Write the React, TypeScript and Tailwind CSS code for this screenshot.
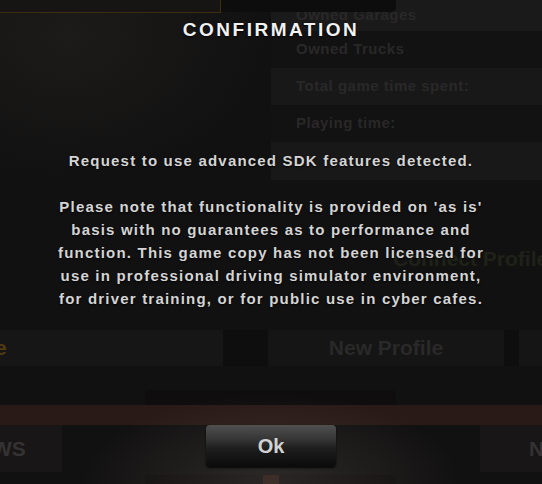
import React from 'react';

const ghostRows = [
  { label: 'Owned Garages', h: 'h-[31px]', tone: 'bg-[#1b1a1a]' },
  { label: 'Owned Trucks', h: 'h-[37px]', tone: 'bg-[#131212]' },
  { label: 'Total game time spent:', h: 'h-[37px]', tone: 'bg-[#191818]' },
  { label: 'Playing time:', h: 'h-[37px]', tone: 'bg-[#131212]' },
  { label: '', h: 'h-[38px]', tone: 'bg-[#191818]' },
];

const notice = [
  "Please note that functionality is provided on 'as is'",
  'basis with no guarantees as to performance and',
  'function. This game copy has not been licensed for',
  'use in professional driving simulator environment,',
  'for driver training, or for public use in cyber cafes.',
];

export default function App() {
  return (
    <div className="relative h-[484px] w-[542px] overflow-hidden bg-[#121111] font-['Liberation_Sans',Arial,sans-serif] font-bold">
      {/* dimmed screen behind the dialog */}
      <div className="flex h-full flex-col">
        <div className="flex h-[180px]">
          <div className="flex w-[271px] flex-col bg-[radial-gradient(ellipse_at_25%_20%,#1c1b1a,#121111_70%)]">
            <div className="h-[13px] w-[221px] border-b border-r border-[#3f2d12] bg-[#171513]" />
          </div>
          <div className="flex flex-1 flex-col">
            {ghostRows.map((r) => (
              <div key={r.h + r.label} className={`flex items-center pl-[25px] ${r.h} ${r.tone}`}>
                <span className="text-[15px] tracking-[0.5px] text-[#292828]">{r.label}</span>
              </div>
            ))}
          </div>
        </div>
        <div className="flex h-[150px] items-center pl-[393px] pt-[8px]">
          <span className="whitespace-nowrap text-[21px] text-[#1f2218]">Connect Profile</span>
        </div>
        <div className="flex h-[36px]">
          <div className="flex w-[223px] items-center bg-[#171616]">
            <span className="-ml-[5px] text-[21px] text-[#523a12]">e</span>
          </div>
          <div className="w-[45px] bg-[#0f0e0e]" />
          <div className="flex w-[236px] items-center justify-center bg-[#161515]">
            <span className="text-[21px] text-[#2a2929]">New Profile</span>
          </div>
          <div className="w-[15px] bg-[#0f0e0e]" />
          <div className="flex-1 bg-[#161515]" />
        </div>
        <div className="flex h-[39px] items-end">
          <div className="ml-[145px] h-[15px] w-[251px] rounded-t-[4px] bg-[#0f0d0d]" />
        </div>
        <div className="h-[20px] bg-[#291a17]" />
        <div className="flex h-[47px] items-center justify-between">
          <div className="flex h-full w-[62px] items-center bg-[#181616]">
            <span className="-ml-[8px] text-[21px] text-[#343232]">WS</span>
          </div>
          <div className="flex h-full w-[62px] items-center bg-[#181616] pl-[49px]">
            <span className="text-[21px] text-[#343232]">N</span>
          </div>
        </div>
        <div className="flex flex-1 items-end">
          <div className="ml-[145px] flex h-[9px] w-[251px] justify-center rounded-t-[4px] bg-[#0f0d0d]">
            <div className="w-[16px] bg-[#2c1915]" />
          </div>
        </div>
      </div>

      {/* tab at the top edge overlapping the stats rows */}
      <div className="absolute left-[221px] top-0 h-[12px] w-[175px] rounded-br-[5px] bg-[#0e0d0d]" />

      {/* confirmation dialog */}
      <div className="absolute inset-0 flex flex-col items-center bg-[radial-gradient(ellipse_190px_90px_at_50%_100%,rgba(95,88,84,0.35),transparent)]">
        <h1 className="mt-[19px] text-[19px] leading-[22px] tracking-[2.5px] text-[#f2f2f2] [text-shadow:0_1px_2px_rgba(0,0,0,0.9)]">
          CONFIRMATION
        </h1>
        <div className="mt-[108px] flex flex-col items-center text-[15px] leading-[23px] tracking-[1.2px] text-[#d4d4d4] [text-shadow:0_1px_2px_rgba(0,0,0,0.9)]">
          <p>Request to use advanced SDK features detected.</p>
          <div className="h-[23px]" />
          {notice.map((line) => (
            <p key={line} className="whitespace-nowrap">{line}</p>
          ))}
        </div>
        <button className="mb-[17px] mt-auto flex h-[42px] w-[130px] items-center justify-center rounded-[4px] bg-[linear-gradient(#505050,#353535_35%,#1e1e1e_55%,#0b0b0b)] text-[20px] text-[#d2d2d2] shadow-[0_1px_2px_rgba(0,0,0,0.8)]">
          Ok
        </button>
      </div>
    </div>
  );
}
